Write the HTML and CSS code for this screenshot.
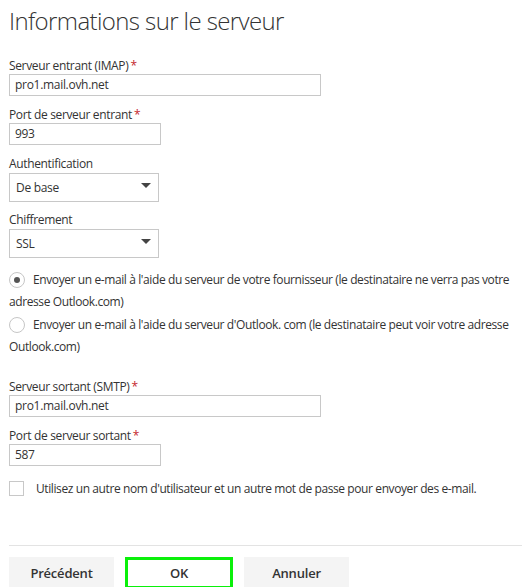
FILE: index.html
```html
<!DOCTYPE html>
<html lang="fr">
<head>
<meta charset="utf-8">
<link rel="stylesheet" href="styles.css">
</head>
<body>
<div class="page">
  <h1 class="title">Informations sur le serveur</h1>

  <div class="field f-first">
    <label class="label">Serveur entrant (IMAP)<span class="req">*</span></label>
    <div class="input wide">pro1.mail.ovh.net</div>
  </div>
  <div class="field">
    <label class="label">Port de serveur entrant<span class="req">*</span></label>
    <div class="input narrow">993</div>
  </div>
  <div class="field">
    <label class="label">Authentification</label>
    <div class="select">De base<span class="caret"></span></div>
  </div>
  <div class="field f-after-select">
    <label class="label">Chiffrement</label>
    <div class="select">SSL<span class="caret"></span></div>
  </div>

  <div class="radios">
    <div class="radio-row"><span class="radio checked"></span><span class="rtext">Envoyer un e-mail à l'aide du serveur de votre fournisseur (le destinataire ne verra pas votre adresse Outlook.com)</span></div>
    <div class="radio-row"><span class="radio"></span><span class="rtext">Envoyer un e-mail à l'aide du serveur d'Outlook. com (le destinataire peut voir votre adresse Outlook.com)</span></div>
  </div>

  <div class="field f-smtp">
    <label class="label">Serveur sortant (SMTP)<span class="req">*</span></label>
    <div class="input wide">pro1.mail.ovh.net</div>
  </div>
  <div class="field">
    <label class="label">Port de serveur sortant<span class="req">*</span></label>
    <div class="input narrow">587</div>
  </div>

  <div class="check-row"><span class="checkbox"></span><span class="ctext">Utilisez un autre nom d'utilisateur et un autre mot de passe pour envoyer des e-mail.</span></div>

  <div class="footer">
    <button class="btn">Précédent</button>
    <button class="btn ok">OK</button>
    <button class="btn">Annuler</button>
  </div>
</div>
</body>
</html>
```
FILE: styles.css
```css
html, body { margin: 0; padding: 0; background: #fff; }
body {
  font-family: "Open Sans", "Noto Sans", sans-serif;
  color: #333;
  font-size: 12px;
  overflow: hidden;
}
.page { padding: 0 4px 0 9px; }
.title {
  margin: 0;
  padding-top: 4px;
  font-weight: 300;
  font-size: 24px;
  line-height: 34px;
  color: #333;
  letter-spacing: -0.6px;
}
.field { margin-top: 11px; }
.f-first { margin-top: 20px; }
.f-after-select { margin-top: 10px; }
.label {
  display: block;
  font-size: 12px;
  line-height: 16px;
  color: #333;
  letter-spacing: -0.35px;
}
.req { color: #c4262e; margin-left: 2px; }
.input {
  box-sizing: border-box;
  border: 1px solid #c8c8c8;
  height: 22px;
  line-height: 20px;
  padding: 0 5px;
  font-size: 12px;
  color: #333;
  letter-spacing: -0.3px;
}
.wide { width: 312px; }
.narrow { width: 152px; }
.select {
  box-sizing: border-box;
  border: 1px solid #c8c8c8;
  width: 150px;
  height: 29px;
  line-height: 27px;
  padding: 0 6px;
  position: relative;
  margin-top: 1px;
  letter-spacing: -0.3px;
}
.caret {
  position: absolute;
  right: 7px;
  top: 9px;
  width: 0; height: 0;
  border-left: 5px solid transparent;
  border-right: 5px solid transparent;
  border-top: 5px solid #444;
}
.radios { margin-top: 11px; }
.radio-row {
  display: flex;
  align-items: flex-start;
  line-height: 22px;
  margin-bottom: 1px;
}
.radio {
  flex: none;
  box-sizing: border-box;
  width: 16px; height: 16px;
  border: 1px solid #c6c6c6;
  border-radius: 50%;
  margin-top: 3px;
  margin-right: -16px;
  position: relative;
}
.radio.checked::after {
  content: "";
  position: absolute;
  left: 4px; top: 4px;
  width: 6px; height: 6px;
  border-radius: 50%;
  background: #555;
}
.rtext { text-indent: 24px; letter-spacing: -0.4px; }
.f-smtp { margin-top: 21px; }
.check-row {
  display: flex;
  align-items: center;
  margin-top: 15px;
  line-height: 15px;
}
.checkbox {
  flex: none;
  box-sizing: border-box;
  width: 15px; height: 15px;
  border: 1px solid #c8c8c8;
  margin-right: 12px;
}
.ctext { letter-spacing: -0.4px; }
.footer {
  margin-top: 49px;
  margin-right: -4px;
  border-top: 1px solid #e3e3e3;
  padding-top: 11px;
  display: flex;
  gap: 11px;
}
.btn {
  box-sizing: border-box;
  width: 105px;
  height: 32px;
  border: none;
  background: #f4f4f4;
  font-family: "Open Sans", "Noto Sans", sans-serif;
  font-size: 13px;
  font-weight: 600;
  color: #333;
  padding: 0;
  letter-spacing: -0.2px;
}
.btn.ok {
  width: 108px;
  background: #fff;
  border: 3px solid #0af00a;
}
```
